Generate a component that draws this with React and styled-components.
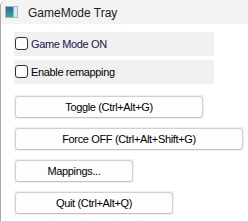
import React from "react";
import styled, { createGlobalStyle } from "styled-components";

const Global = createGlobalStyle`
  html, body { margin: 0; padding: 0; background: #ffffff; }
  body { font-family: "Liberation Sans", Arial, sans-serif; }
  * { box-sizing: border-box; }
`;

const Window = styled.div`
  width: 248px;
  height: 221px;
  background: #ffffff;
  border-left: 1px solid #a9a9a9;
  border-top-left-radius: 6px;
  overflow: hidden;
  display: flex;
  flex-direction: column;
`;

const TitleBar = styled.div`
  height: 24px;
  background: #f3f3f3;
  display: flex;
  align-items: center;
  padding-left: 4px;
  gap: 10px;
`;

const TitleText = styled.span`
  font-family: "Liberation Sans", Arial, sans-serif;
  font-size: 12px;
  color: #1a1a1a;
  margin-top: 1px;
`;

const Content = styled.div`
  display: flex;
  flex-direction: column;
  padding: 8px 0 0 13px;
`;

const Checks = styled.div`
  display: flex;
  flex-direction: column;
  gap: 4px;
  margin-bottom: 11px;
`;

const CheckRow = styled.label`
  width: 200px;
  height: 24px;
  background: #f0f0f0;
  display: flex;
  align-items: center;
  gap: 3px;
  padding-left: 1px;
  font-size: 11px;
  letter-spacing: -0.35px;
  color: ${(p) => (p.$focus ? "#15154a" : "#000000")};
`;

const Box = styled.span`
  width: 13px;
  height: 13px;
  border: 1px solid #333333;
  border-radius: 3px;
  background: #ffffff;
  flex: none;
  margin-top: -1px;
`;

const Buttons = styled.div`
  display: flex;
  flex-direction: column;
  gap: 8px;
`;

const ButtonCell = styled.div`
  width: ${(p) => p.$w}px;
  height: 24px;
  padding: 1px;
  background: #f0f0f0;
  display: flex;
`;

const Button = styled.button`
  flex: 1;
  margin: 0;
  padding: 0;
  border: 1px solid #d0d0d0;
  border-bottom-color: #c2c2c2;
  border-radius: 4px;
  background: #fdfdfd;
  font-family: "Liberation Sans", Arial, sans-serif;
  font-size: 11px;
  letter-spacing: -0.35px;
  color: #000000;
  display: flex;
  align-items: center;
  justify-content: center;
`;

const AppIcon = () => (
  <svg width="13" height="12" viewBox="0 0 13 12">
    <defs>
      <linearGradient id="ig" x1="0" y1="0" x2="0" y2="1">
        <stop offset="0" stopColor="#2d6aa8" />
        <stop offset="0.55" stopColor="#2f8a9a" />
        <stop offset="1" stopColor="#49a86a" />
      </linearGradient>
    </defs>
    <rect x="0.5" y="0.5" width="12" height="11" fill="#e4ebf0" stroke="#9fb4c4" />
    <rect x="1" y="1" width="7.5" height="10" fill="url(#ig)" />
    <rect x="9" y="1" width="3" height="10" fill="#dde6ec" />
  </svg>
);

export default function App() {
  return (
    <>
      <Global />
      <Window>
        <TitleBar>
          <AppIcon />
          <TitleText>GameMode Tray</TitleText>
        </TitleBar>
        <Content>
          <Checks>
            <CheckRow $focus>
              <Box />
              Game Mode ON
            </CheckRow>
            <CheckRow>
              <Box />
              Enable remapping
            </CheckRow>
          </Checks>
          <Buttons>
            <ButtonCell $w={190}>
              <Button>Toggle (Ctrl+Alt+G)</Button>
            </ButtonCell>
            <ButtonCell $w={230}>
              <Button>Force OFF (Ctrl+Alt+Shift+G)</Button>
            </ButtonCell>
            <ButtonCell $w={120}>
              <Button>Mappings...</Button>
            </ButtonCell>
            <ButtonCell $w={160}>
              <Button>Quit (Ctrl+Alt+Q)</Button>
            </ButtonCell>
          </Buttons>
        </Content>
      </Window>
    </>
  );
}
